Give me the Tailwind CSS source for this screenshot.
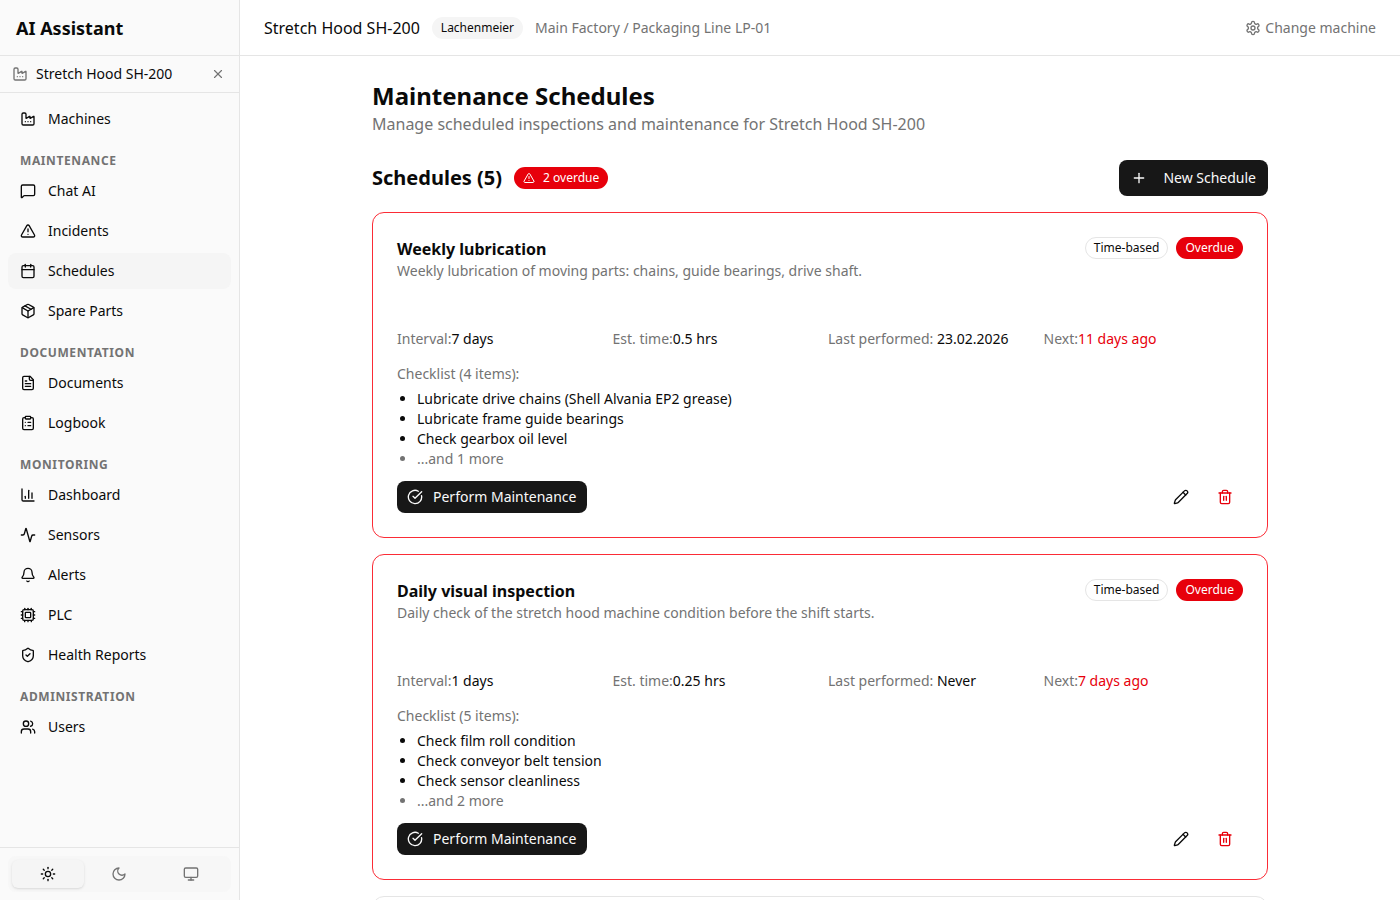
<!DOCTYPE html>
<html lang="en">
<head>
  <meta charset="UTF-8" />
  <title>Maintenance Schedules</title>
  <script src="https://cdn.jsdelivr.net/npm/@tailwindcss/browser@4"></script>
</head>
<body class="font-['Noto_Sans',sans-serif] text-[#0a0a0a] bg-white h-[900px] overflow-hidden flex">

  <!-- Sidebar -->
  <aside class="w-[240px] h-[900px] shrink-0 flex flex-col bg-[#fafafa] border-r border-[#e5e5e5]">
    <div class="h-[56px] shrink-0 px-4 flex items-center border-b border-[#e5e5e5]">
      <span class="text-lg font-bold leading-7">AI Assistant</span>
    </div>
    <div class="h-[37px] shrink-0 pl-3 pr-[14px] flex items-center border-b border-[#e5e5e5]">
      <svg class="w-4 h-4 text-[#737373]" viewBox="0 0 24 24" fill="none" stroke="currentColor" stroke-width="2" stroke-linecap="round" stroke-linejoin="round"><path d="M12 16h.01"/><path d="M16 16h.01"/><path d="M3 19a2 2 0 0 0 2 2h14a2 2 0 0 0 2-2V8.5a.5.5 0 0 0-.769-.422l-4.462 2.844A.5.5 0 0 1 15 10.5v-2a.5.5 0 0 0-.769-.422L9.77 10.922A.5.5 0 0 1 9 10.5V5a2 2 0 0 0-2-2H5a2 2 0 0 0-2 2z"/><path d="M8 16h.01"/></svg>
      <span class="ml-2 text-sm flex-1">Stretch Hood SH-200</span>
      <svg class="w-[14px] h-[14px] text-[#737373]" viewBox="0 0 24 24" fill="none" stroke="currentColor" stroke-width="2" stroke-linecap="round" stroke-linejoin="round"><path d="M18 6 6 18"/><path d="m6 6 12 12"/></svg>
    </div>

    <nav class="flex-1 px-2 pt-2 text-sm">
      <a class="h-9 px-3 flex items-center gap-3 rounded-lg">
        <svg class="w-4 h-4" viewBox="0 0 24 24" fill="none" stroke="currentColor" stroke-width="2" stroke-linecap="round" stroke-linejoin="round"><path d="M12 16h.01"/><path d="M16 16h.01"/><path d="M3 19a2 2 0 0 0 2 2h14a2 2 0 0 0 2-2V8.5a.5.5 0 0 0-.769-.422l-4.462 2.844A.5.5 0 0 1 15 10.5v-2a.5.5 0 0 0-.769-.422L9.77 10.922A.5.5 0 0 1 9 10.5V5a2 2 0 0 0-2-2H5a2 2 0 0 0-2 2z"/><path d="M8 16h.01"/></svg>
        Machines
      </a>

      <p class="mt-4 mb-1 px-3 h-4 text-xs leading-4 font-bold tracking-wider text-[#737373]">MAINTENANCE</p>
      <div class="flex flex-col gap-1">
        <a class="h-9 px-3 flex items-center gap-3 rounded-lg">
          <svg class="w-4 h-4" viewBox="0 0 24 24" fill="none" stroke="currentColor" stroke-width="2" stroke-linecap="round" stroke-linejoin="round"><path d="M22 17a2 2 0 0 1-2 2H6.828a2 2 0 0 0-1.414.586l-2.202 2.202A.71.71 0 0 1 2 21.286V5a2 2 0 0 1 2-2h16a2 2 0 0 1 2 2z"/></svg>
          Chat AI
        </a>
        <a class="h-9 px-3 flex items-center gap-3 rounded-lg">
          <svg class="w-4 h-4" viewBox="0 0 24 24" fill="none" stroke="currentColor" stroke-width="2" stroke-linecap="round" stroke-linejoin="round"><path d="m21.73 18-8-14a2 2 0 0 0-3.48 0l-8 14A2 2 0 0 0 4 21h16a2 2 0 0 0 1.73-3"/><path d="M12 9v4"/><path d="M12 17h.01"/></svg>
          Incidents
        </a>
        <a class="h-9 px-3 flex items-center gap-3 rounded-lg bg-[#f5f5f5]">
          <svg class="w-4 h-4" viewBox="0 0 24 24" fill="none" stroke="currentColor" stroke-width="2" stroke-linecap="round" stroke-linejoin="round"><path d="M8 2v4"/><path d="M16 2v4"/><rect width="18" height="18" x="3" y="4" rx="2"/><path d="M3 10h18"/></svg>
          Schedules
        </a>
        <a class="h-9 px-3 flex items-center gap-3 rounded-lg">
          <svg class="w-4 h-4" viewBox="0 0 24 24" fill="none" stroke="currentColor" stroke-width="2" stroke-linecap="round" stroke-linejoin="round"><path d="M11 21.73a2 2 0 0 0 2 0l7-4A2 2 0 0 0 21 16V8a2 2 0 0 0-1-1.73l-7-4a2 2 0 0 0-2 0l-7 4A2 2 0 0 0 3 8v8a2 2 0 0 0 1 1.73z"/><path d="M12 22V12"/><path d="m3.3 7 8.7 5 8.7-5"/><path d="m7.5 4.27 9 5.15"/></svg>
          Spare Parts
        </a>
      </div>

      <p class="mt-4 mb-1 px-3 h-4 text-xs leading-4 font-bold tracking-wider text-[#737373]">DOCUMENTATION</p>
      <div class="flex flex-col gap-1">
        <a class="h-9 px-3 flex items-center gap-3 rounded-lg">
          <svg class="w-4 h-4" viewBox="0 0 24 24" fill="none" stroke="currentColor" stroke-width="2" stroke-linecap="round" stroke-linejoin="round"><path d="M15 2H6a2 2 0 0 0-2 2v16a2 2 0 0 0 2 2h12a2 2 0 0 0 2-2V7Z"/><path d="M14 2v4a2 2 0 0 0 2 2h4"/><path d="M10 9H8"/><path d="M16 13H8"/><path d="M16 17H8"/></svg>
          Documents
        </a>
        <a class="h-9 px-3 flex items-center gap-3 rounded-lg">
          <svg class="w-4 h-4" viewBox="0 0 24 24" fill="none" stroke="currentColor" stroke-width="2" stroke-linecap="round" stroke-linejoin="round"><rect width="8" height="4" x="8" y="2" rx="1" ry="1"/><path d="M16 4h2a2 2 0 0 1 2 2v14a2 2 0 0 1-2 2H6a2 2 0 0 1-2-2V6a2 2 0 0 1 2-2h2"/><path d="M12 11h4"/><path d="M12 16h4"/><path d="M8 11h.01"/><path d="M8 16h.01"/></svg>
          Logbook
        </a>
      </div>

      <p class="mt-4 mb-1 px-3 h-4 text-xs leading-4 font-bold tracking-wider text-[#737373]">MONITORING</p>
      <div class="flex flex-col gap-1">
        <a class="h-9 px-3 flex items-center gap-3 rounded-lg">
          <svg class="w-4 h-4" viewBox="0 0 24 24" fill="none" stroke="currentColor" stroke-width="2" stroke-linecap="round" stroke-linejoin="round"><path d="M3 3v16a2 2 0 0 0 2 2h16"/><path d="M18 17V9"/><path d="M13 17V5"/><path d="M8 17v-3"/></svg>
          Dashboard
        </a>
        <a class="h-9 px-3 flex items-center gap-3 rounded-lg">
          <svg class="w-4 h-4" viewBox="0 0 24 24" fill="none" stroke="currentColor" stroke-width="2" stroke-linecap="round" stroke-linejoin="round"><path d="M22 12h-2.48a2 2 0 0 0-1.93 1.46l-2.35 8.36a.25.25 0 0 1-.48 0L9.24 2.18a.25.25 0 0 0-.48 0l-2.35 8.36A2 2 0 0 1 4.49 12H2"/></svg>
          Sensors
        </a>
        <a class="h-9 px-3 flex items-center gap-3 rounded-lg">
          <svg class="w-4 h-4" viewBox="0 0 24 24" fill="none" stroke="currentColor" stroke-width="2" stroke-linecap="round" stroke-linejoin="round"><path d="M10.268 21a2 2 0 0 0 3.464 0"/><path d="M3.262 15.326A1 1 0 0 0 4 17h16a1 1 0 0 0 .74-1.673C19.41 13.956 18 12.499 18 8A6 6 0 0 0 6 8c0 4.499-1.411 5.956-2.738 7.326"/></svg>
          Alerts
        </a>
        <a class="h-9 px-3 flex items-center gap-3 rounded-lg">
          <svg class="w-4 h-4" viewBox="0 0 24 24" fill="none" stroke="currentColor" stroke-width="2" stroke-linecap="round" stroke-linejoin="round"><path d="M12 20v2"/><path d="M12 2v2"/><path d="M17 20v2"/><path d="M17 2v2"/><path d="M2 12h2"/><path d="M2 17h2"/><path d="M2 7h2"/><path d="M20 12h2"/><path d="M20 17h2"/><path d="M20 7h2"/><path d="M7 20v2"/><path d="M7 2v2"/><rect x="4" y="4" width="16" height="16" rx="2"/><rect x="8" y="8" width="8" height="8" rx="1"/></svg>
          PLC
        </a>
        <a class="h-9 px-3 flex items-center gap-3 rounded-lg">
          <svg class="w-4 h-4" viewBox="0 0 24 24" fill="none" stroke="currentColor" stroke-width="2" stroke-linecap="round" stroke-linejoin="round"><path d="M20 13c0 5-3.5 7.5-7.66 8.95a1 1 0 0 1-.67-.01C7.5 20.5 4 18 4 13V6a1 1 0 0 1 1-1c2 0 4.5-1.2 6.24-2.72a1.17 1.17 0 0 1 1.52 0C14.51 3.81 17 5 19 5a1 1 0 0 1 1 1z"/><path d="m9 12 2 2 4-4"/></svg>
          Health Reports
        </a>
      </div>

      <p class="mt-4 mb-1 px-3 h-4 text-xs leading-4 font-bold tracking-wider text-[#737373]">ADMINISTRATION</p>
      <a class="h-9 px-3 flex items-center gap-3 rounded-lg">
        <svg class="w-4 h-4" viewBox="0 0 24 24" fill="none" stroke="currentColor" stroke-width="2" stroke-linecap="round" stroke-linejoin="round"><path d="M16 21v-2a4 4 0 0 0-4-4H6a4 4 0 0 0-4 4v2"/><path d="M16 3.128a4 4 0 0 1 0 7.744"/><path d="M22 21v-2a4 4 0 0 0-3-3.87"/><circle cx="9" cy="7" r="4"/></svg>
        Users
      </a>
    </nav>

    <div class="border-t border-[#e5e5e5] p-2">
      <div class="grid grid-cols-3 p-1 rounded-lg bg-[#f5f5f5]/60 text-[#737373]">
        <div class="h-7 flex items-center justify-center rounded-md bg-[#f5f5f5] shadow-sm text-[#0a0a0a]">
          <svg class="w-4 h-4" viewBox="0 0 24 24" fill="none" stroke="currentColor" stroke-width="2" stroke-linecap="round" stroke-linejoin="round"><circle cx="12" cy="12" r="4"/><path d="M12 2v2"/><path d="M12 20v2"/><path d="m4.93 4.93 1.41 1.41"/><path d="m17.66 17.66 1.41 1.41"/><path d="M2 12h2"/><path d="M20 12h2"/><path d="m6.34 17.66-1.41 1.41"/><path d="m19.07 4.93-1.41 1.41"/></svg>
        </div>
        <div class="h-7 flex items-center justify-center">
          <svg class="w-4 h-4" viewBox="0 0 24 24" fill="none" stroke="currentColor" stroke-width="2" stroke-linecap="round" stroke-linejoin="round"><path d="M12 3a6 6 0 0 0 9 9 9 9 0 1 1-9-9Z"/></svg>
        </div>
        <div class="h-7 flex items-center justify-center">
          <svg class="w-4 h-4" viewBox="0 0 24 24" fill="none" stroke="currentColor" stroke-width="2" stroke-linecap="round" stroke-linejoin="round"><rect width="20" height="14" x="2" y="3" rx="2"/><path d="M8 21h8"/><path d="M12 17v4"/></svg>
        </div>
      </div>
    </div>
  </aside>

  <!-- Main -->
  <div class="flex-1 min-w-0 flex flex-col">
    <header class="h-[56px] shrink-0 px-6 flex items-center border-b border-[#e5e5e5]">
      <span class="text-base">Stretch Hood SH-200</span>
      <span class="ml-3 px-[9px] h-[22px] flex items-center rounded-full bg-[#f5f5f5] text-xs">Lachenmeier</span>
      <span class="ml-3 text-sm text-[#737373]">Main Factory / Packaging Line LP-01</span>
      <span class="ml-auto flex items-center gap-1 text-sm text-[#737373]">
        <svg class="w-4 h-4" viewBox="0 0 24 24" fill="none" stroke="currentColor" stroke-width="2" stroke-linecap="round" stroke-linejoin="round"><path d="M12.22 2h-.44a2 2 0 0 0-2 2v.18a2 2 0 0 1-1 1.73l-.43.25a2 2 0 0 1-2 0l-.15-.08a2 2 0 0 0-2.73.73l-.22.38a2 2 0 0 0 .73 2.73l.15.1a2 2 0 0 1 1 1.72v.51a2 2 0 0 1-1 1.74l-.15.09a2 2 0 0 0-.73 2.73l.22.38a2 2 0 0 0 2.73.73l.15-.08a2 2 0 0 1 2 0l.43.25a2 2 0 0 1 1 1.73V20a2 2 0 0 0 2 2h.44a2 2 0 0 0 2-2v-.18a2 2 0 0 1 1-1.73l.43-.25a2 2 0 0 1 2 0l.15.08a2 2 0 0 0 2.73-.73l.22-.39a2 2 0 0 0-.73-2.73l-.15-.08a2 2 0 0 1-1-1.74v-.5a2 2 0 0 1 1-1.74l.15-.09a2 2 0 0 0 .73-2.73l-.22-.38a2 2 0 0 0-2.73-.73l-.15.08a2 2 0 0 1-2 0l-.43-.25a2 2 0 0 1-1-1.73V4a2 2 0 0 0-2-2z"/><circle cx="12" cy="12" r="3"/></svg>
        Change machine
      </span>
    </header>

    <main class="flex-1 overflow-hidden pt-6">
      <div class="w-[896px] mx-auto">
        <h1 class="text-2xl font-bold leading-8">Maintenance Schedules</h1>
        <p class="text-base leading-6 text-[#737373]">Manage scheduled inspections and maintenance for Stretch Hood SH-200</p>

        <div class="mt-6 mb-4 h-9 flex items-center">
          <h2 class="text-xl font-bold">Schedules (5)</h2>
          <span class="ml-3 h-[22px] px-[9px] flex items-center gap-2 rounded-full bg-[#e7000b] text-white text-xs">
            <svg class="w-3 h-3" viewBox="0 0 24 24" fill="none" stroke="currentColor" stroke-width="2" stroke-linecap="round" stroke-linejoin="round"><path d="m21.73 18-8-14a2 2 0 0 0-3.48 0l-8 14A2 2 0 0 0 4 21h16a2 2 0 0 0 1.73-3"/><path d="M12 9v4"/><path d="M12 17h.01"/></svg>
            2 overdue
          </span>
          <button class="ml-auto h-9 px-3 flex items-center gap-4 rounded-lg bg-[#171717] text-[#fafafa] text-sm">
            <svg class="w-4 h-4" viewBox="0 0 24 24" fill="none" stroke="currentColor" stroke-width="2" stroke-linecap="round" stroke-linejoin="round"><path d="M5 12h14"/><path d="M12 5v14"/></svg>
            New Schedule
          </button>
        </div>

        <div class="flex flex-col gap-4">
          <!-- Card 1 -->
          <section class="h-[326px] rounded-xl border border-[#fb2c36] bg-white p-6 flex flex-col">
            <div class="flex items-start justify-between">
              <div>
                <h3 class="text-base leading-6 font-bold">Weekly lubrication</h3>
                <p class="text-sm text-[#737373]">Weekly lubrication of moving parts: chains, guide bearings, drive shaft.</p>
              </div>
              <div class="flex gap-2">
                <span class="h-[22px] px-2 flex items-center rounded-full border border-[#e5e5e5] text-xs">Time-based</span>
                <span class="h-[22px] px-[9px] flex items-center rounded-full bg-[#e7000b] text-white text-xs">Overdue</span>
              </div>
            </div>
            <div class="mt-12 grid grid-cols-4 gap-4 text-sm">
              <div><span class="text-[#737373]">Interval:</span>7 days</div>
              <div><span class="text-[#737373]">Est. time:</span>0.5 hrs</div>
              <div><span class="text-[#737373]">Last performed:</span> 23.02.2026</div>
              <div><span class="text-[#737373]">Next:</span><span class="text-[#e7000b]">11 days ago</span></div>
            </div>
            <p class="mt-[15px] text-sm text-[#737373]">Checklist (4 items):</p>
            <ul class="mt-[5px] list-disc pl-5 text-sm">
              <li>Lubricate drive chains (Shell Alvania EP2 grease)</li>
              <li>Lubricate frame guide bearings</li>
              <li>Check gearbox oil level</li>
              <li class="text-[#737373]">...and 1 more</li>
            </ul>
            <div class="mt-3 flex items-center justify-between">
              <button class="h-8 px-[10px] flex items-center gap-[10px] rounded-lg bg-[#171717] text-[#fafafa] text-sm">
                <svg class="w-4 h-4" viewBox="0 0 24 24" fill="none" stroke="currentColor" stroke-width="2" stroke-linecap="round" stroke-linejoin="round"><path d="M21.801 10A10 10 0 1 1 17 3.335"/><path d="m9 11 3 3L22 4"/></svg>
                Perform Maintenance
              </button>
              <div class="flex gap-2">
                <button class="w-9 h-8 flex items-center justify-center">
                  <svg class="w-4 h-4" viewBox="0 0 24 24" fill="none" stroke="currentColor" stroke-width="2" stroke-linecap="round" stroke-linejoin="round"><path d="M21.174 6.812a1 1 0 0 0-3.986-3.987L3.842 16.174a2 2 0 0 0-.5.83l-1.321 4.352a.5.5 0 0 0 .623.622l4.353-1.32a2 2 0 0 0 .83-.497z"/><path d="m15 5 4 4"/></svg>
                </button>
                <button class="w-9 h-8 flex items-center justify-center text-[#e7000b]">
                  <svg class="w-4 h-4" viewBox="0 0 24 24" fill="none" stroke="currentColor" stroke-width="2" stroke-linecap="round" stroke-linejoin="round"><path d="M3 6h18"/><path d="M19 6v14c0 1-1 2-2 2H7c-1 0-2-1-2-2V6"/><path d="M8 6V4c0-1 1-2 2-2h4c1 0 2 1 2 2v2"/><line x1="10" x2="10" y1="11" y2="17"/><line x1="14" x2="14" y1="11" y2="17"/></svg>
                </button>
              </div>
            </div>
          </section>

          <!-- Card 2 -->
          <section class="h-[326px] rounded-xl border border-[#fb2c36] bg-white p-6 flex flex-col">
            <div class="flex items-start justify-between">
              <div>
                <h3 class="text-base leading-6 font-bold">Daily visual inspection</h3>
                <p class="text-sm text-[#737373]">Daily check of the stretch hood machine condition before the shift starts.</p>
              </div>
              <div class="flex gap-2">
                <span class="h-[22px] px-2 flex items-center rounded-full border border-[#e5e5e5] text-xs">Time-based</span>
                <span class="h-[22px] px-[9px] flex items-center rounded-full bg-[#e7000b] text-white text-xs">Overdue</span>
              </div>
            </div>
            <div class="mt-12 grid grid-cols-4 gap-4 text-sm">
              <div><span class="text-[#737373]">Interval:</span>1 days</div>
              <div><span class="text-[#737373]">Est. time:</span>0.25 hrs</div>
              <div><span class="text-[#737373]">Last performed:</span> Never</div>
              <div><span class="text-[#737373]">Next:</span><span class="text-[#e7000b]">7 days ago</span></div>
            </div>
            <p class="mt-[15px] text-sm text-[#737373]">Checklist (5 items):</p>
            <ul class="mt-[5px] list-disc pl-5 text-sm">
              <li>Check film roll condition</li>
              <li>Check conveyor belt tension</li>
              <li>Check sensor cleanliness</li>
              <li class="text-[#737373]">...and 2 more</li>
            </ul>
            <div class="mt-3 flex items-center justify-between">
              <button class="h-8 px-[10px] flex items-center gap-[10px] rounded-lg bg-[#171717] text-[#fafafa] text-sm">
                <svg class="w-4 h-4" viewBox="0 0 24 24" fill="none" stroke="currentColor" stroke-width="2" stroke-linecap="round" stroke-linejoin="round"><path d="M21.801 10A10 10 0 1 1 17 3.335"/><path d="m9 11 3 3L22 4"/></svg>
                Perform Maintenance
              </button>
              <div class="flex gap-2">
                <button class="w-9 h-8 flex items-center justify-center">
                  <svg class="w-4 h-4" viewBox="0 0 24 24" fill="none" stroke="currentColor" stroke-width="2" stroke-linecap="round" stroke-linejoin="round"><path d="M21.174 6.812a1 1 0 0 0-3.986-3.987L3.842 16.174a2 2 0 0 0-.5.83l-1.321 4.352a.5.5 0 0 0 .623.622l4.353-1.32a2 2 0 0 0 .83-.497z"/><path d="m15 5 4 4"/></svg>
                </button>
                <button class="w-9 h-8 flex items-center justify-center text-[#e7000b]">
                  <svg class="w-4 h-4" viewBox="0 0 24 24" fill="none" stroke="currentColor" stroke-width="2" stroke-linecap="round" stroke-linejoin="round"><path d="M3 6h18"/><path d="M19 6v14c0 1-1 2-2 2H7c-1 0-2-1-2-2V6"/><path d="M8 6V4c0-1 1-2 2-2h4c1 0 2 1 2 2v2"/><line x1="10" x2="10" y1="11" y2="17"/><line x1="14" x2="14" y1="11" y2="17"/></svg>
                </button>
              </div>
            </div>
          </section>

          <!-- Card 3, cut off by the window -->
          <section class="h-[326px] rounded-xl border border-[#e5e5e5] bg-white"></section>
        </div>
      </div>
    </main>
  </div>
</body>
</html>
